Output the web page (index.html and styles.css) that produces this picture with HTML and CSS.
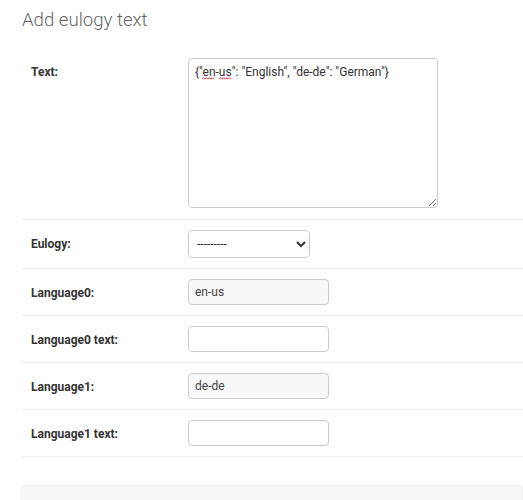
FILE: index.html
```html
<!DOCTYPE html>
<html>
<head>
<meta charset="utf-8">
<link rel="stylesheet" href="styles.css">
</head>
<body>
<div class="content">
  <h1 class="title">Add eulogy text</h1>
  <form class="form">
    <div class="row row-ta">
      <label class="label">Text:</label>
      <div class="ta-wrap">
        <textarea class="ta" spellcheck="false">{"en-us": "English", "de-de": "German"}</textarea>
        <svg class="squiggle sq1" width="12" height="3" viewBox="0 0 12 3"><path d="M0 2.2 L1.5 0.7 L3 2.2 L4.5 0.7 L6 2.2 L7.5 0.7 L9 2.2 L10.5 0.7 L12 2.2" fill="none" stroke="#e02020" stroke-width="0.9"/></svg>
        <svg class="squiggle sq2" width="12" height="3" viewBox="0 0 12 3"><path d="M0 2.2 L1.5 0.7 L3 2.2 L4.5 0.7 L6 2.2 L7.5 0.7 L9 2.2 L10.5 0.7 L12 2.2" fill="none" stroke="#e02020" stroke-width="0.9"/></svg>
      </div>
    </div>
    <div class="row">
      <label class="label">Eulogy:</label>
      <select class="sel"><option>---------</option></select>
    </div>
    <div class="row">
      <label class="label">Language0:</label>
      <input class="inp ro" type="text" value="en-us" readonly>
    </div>
    <div class="row">
      <label class="label">Language0 text:</label>
      <input class="inp" type="text" value="">
    </div>
    <div class="row">
      <label class="label">Language1:</label>
      <input class="inp ro" type="text" value="de-de" readonly>
    </div>
    <div class="row">
      <label class="label">Language1 text:</label>
      <input class="inp" type="text" value="">
    </div>
    <div class="submit-row"></div>
  </form>
</div>
</body>
</html>
```
FILE: styles.css
```css
html, body {
  margin: 0;
  padding: 0;
  background: #fff;
}
body {
  font-family: Roboto, "Liberation Sans", sans-serif;
  color: #333;
  font-size: 12px;
}
.content {
  padding: 0 0 0 21px;
}
.title {
  margin: 0;
  padding: 9px 0 0 1px;
  font-size: 18.6px;
  font-weight: 300;
  color: #666;
  line-height: 22px;
  box-sizing: border-box;
  height: 48px;
}
.form {
  display: flex;
  flex-direction: column;
}
.row {
  display: grid;
  grid-template-columns: 157px auto;
  justify-content: start;
  align-items: start;
  padding: 10px 10px;
  border-bottom: 1px solid #eee;
}
.row-ta {
  padding-bottom: 11px;
}
.label {
  font-weight: 700;
  font-size: 12px;
  line-height: 16px;
  padding-top: 6px;
  color: #333;
}
.ta-wrap {
  position: relative;
  display: flex;
}
.ta {
  width: 250px;
  height: 150px;
  box-sizing: border-box;
  border: 1px solid #ccc;
  border-radius: 4px;
  padding: 5px 6px;
  font-family: Roboto, "Liberation Sans", sans-serif;
  font-size: 12px;
  line-height: 16px;
  color: #333;
  margin: 0;
  resize: both;
  outline: none;
}
.squiggle {
  position: absolute;
  top: 19px;
}
.sq1 { left: 14px; }
.sq2 { left: 31px; }
.sel {
  width: 122px;
  height: 28px;
  box-sizing: border-box;
  border: 1px solid #ccc;
  border-radius: 4px;
  background: #fff;
  font-family: Roboto, "Liberation Sans", sans-serif;
  font-size: 12px;
  color: #333;
  padding: 0 4px;
  margin: 0;
}
.inp {
  width: 141px;
  height: 26px;
  box-sizing: border-box;
  border: 1px solid #ccc;
  border-radius: 4px;
  padding: 5px 6px;
  font-family: Roboto, "Liberation Sans", sans-serif;
  font-size: 12px;
  color: #333;
  margin: 0;
  background: #fff;
  outline: none;
}
.ro {
  background: #f8f8f8;
  color: #444;
}
.submit-row {
  margin-top: 28px;
  height: 40px;
  background: #f8f8f8;
  border: 1px solid #eee;
  border-radius: 4px;
}
```
